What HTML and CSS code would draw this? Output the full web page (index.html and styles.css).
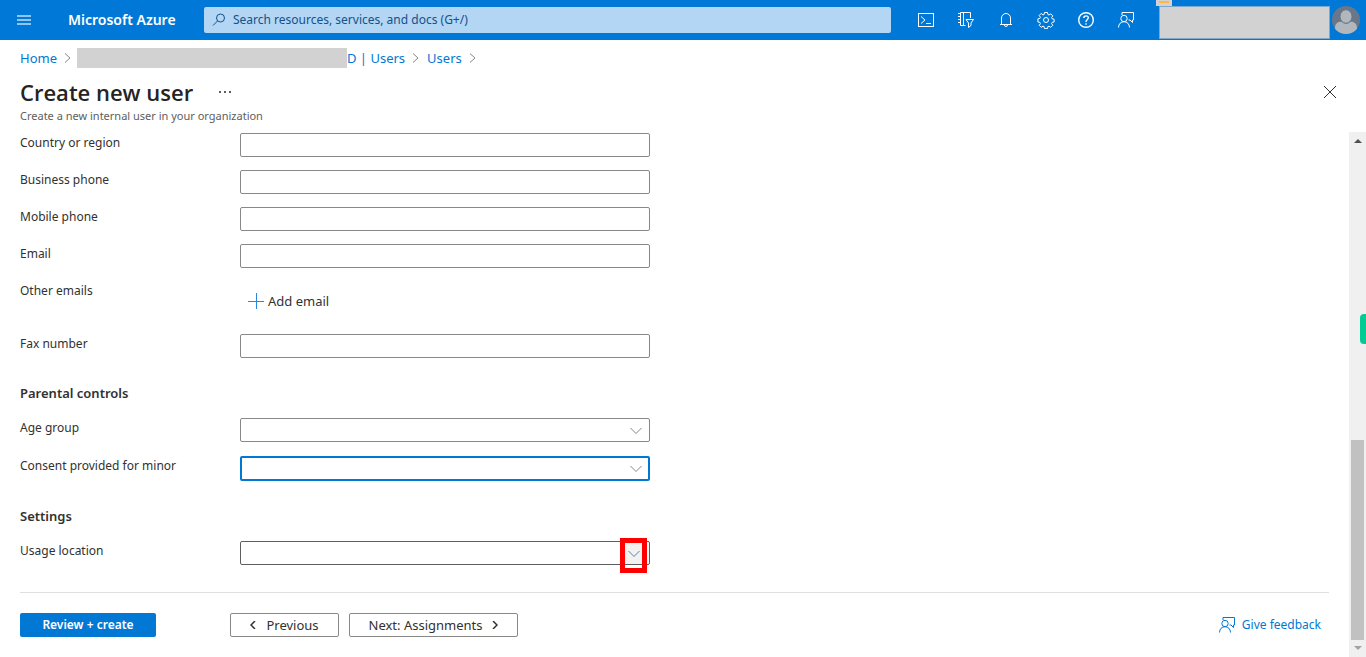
FILE: index.html
```html
<!DOCTYPE html>
<html lang="en">
<head>
<meta charset="utf-8">
<meta name="viewport" content="width=device-width, initial-scale=1">
<title>Create new user - Microsoft Azure</title>
<link rel="stylesheet" href="styles.css">
</head>
<body>
<svg class="defs" aria-hidden="true">
  <symbol id="chevron-down" viewBox="0 0 14 8"><path d="M1.500 1l5.500 5.500L12.500 1"/></symbol>
  <symbol id="chevron-right" viewBox="0 0 8 12"><path d="M1 1.500L6 6 1 10.500"/></symbol>
  <symbol id="feedback" viewBox="0 0 18 18"><path d="M5 4V1.500h11.500v7.500h-1v2.500L13 9h-1.500"/><circle cx="7" cy="7.500" r="3.200"/><path d="M1.500 16.500c0-3.500 2.400-5.800 5.500-5.800s5.500 2.300 5.500 5.800"/></symbol>
</svg>

<header class="topbar">
  <button class="menu" type="button" aria-label="Show portal menu">
    <svg width="14" height="10" viewBox="0 0 14 10"><path d="M0 1h14M0 5h14M0 9h14"/></svg>
  </button>
  <a class="brand" href="#">Microsoft Azure</a>
  <div class="search">
    <svg class="icon" width="14" height="14" viewBox="0 0 14 14"><circle cx="8.500" cy="5" r="4"/><path d="M5.500 8L1 12.500"/></svg>
    <input type="search" aria-label="Search" placeholder="Search resources, services, and docs (G+/)">
  </div>
  <nav class="tools" aria-label="Portal tools">
    <button type="button" aria-label="Cloud Shell"><svg class="icon" width="18" height="18" viewBox="0 0 18 18"><rect x="1.500" y="2.500" width="15" height="13"/><path d="M4 5.500L8 9l-4 3.500M9 12.500h5"/></svg></button>
    <button type="button" aria-label="Directories and subscriptions"><svg class="icon" width="18" height="18" viewBox="0 0 18 18"><path d="M8.500 14.500H3.500v-13H13.500V7M6.500 1.500v13M1 2.500h2.500M1 5.500h2.500M1 8.500h2.500M1 11.500h2.500"/><path d="M9 8.500h7.500L14 12v2.500l-2.500 2V12z"/></svg></button>
    <button type="button" aria-label="Notifications"><svg class="icon" width="18" height="18" viewBox="0 0 18 18"><path d="M3 13.500h12M4.500 13.500V7a4.500 4.500 0 0 1 9 0v6.500M7.500 14a1.500 1.500 0 0 0 3 0"/></svg></button>
    <button type="button" aria-label="Settings"><svg class="icon" width="18" height="18" viewBox="0 0 18 18"><path d="M7.500 1.500h3l.4 2 1.100.5 1.800-1.200 2 2.100-1.200 1.700.5 1.200 2 .4v2.800l-2 .4-.5 1.200 1.200 1.700-2 2-1.800-1.100-1.100.4-.4 2h-3l-.4-2-1.100-.4-1.800 1.100-2-2 1.200-1.700-.5-1.200-2-.4V7.800l2-.4.5-1.200-1.200-1.700 2-2.100L6 4l1.100-.5z"/><circle cx="9" cy="9" r="2.500"/></svg></button>
    <button type="button" aria-label="Help"><svg class="icon help" width="18" height="18" viewBox="0 0 18 18"><circle cx="9" cy="9" r="7.300"/><path d="M6.800 7c0-3 4.500-2.700 4.500-.2C11.300 8.500 9 8.500 9 11M9 12.300v1.400"/></svg></button>
    <button type="button" aria-label="Feedback"><svg class="icon" width="18" height="18"><use href="#feedback"/></svg></button>
  </nav>
  <div class="account">
    <span class="account-tab"></span>
    <span class="account-name"></span>
    <svg class="avatar" width="28" height="28" viewBox="0 0 28 28"><defs><clipPath id="face"><circle cx="14" cy="14" r="14"/></clipPath></defs><g clip-path="url(#face)"><rect width="28" height="28" fill="#69778a"/><path d="M3 28v-6c0-6 5-7 7-6 3 2 6 2 8 0 3-1 7 1 7 6v6z" fill="#b1b7bd"/><ellipse cx="14" cy="10.500" rx="6" ry="6.800" fill="#b1b7bd" stroke="#69778a"/></g></svg>
  </div>
</header>

<nav class="crumbs" aria-label="Breadcrumb">
  <a href="#">Home</a>
  <svg class="icon" width="8" height="12"><use href="#chevron-right"/></svg>
  <a class="tenant" href="#"><span class="redacted"></span>D | Users</a>
  <svg class="icon" width="8" height="12"><use href="#chevron-right"/></svg>
  <a href="#">Users</a>
  <svg class="icon" width="8" height="12"><use href="#chevron-right"/></svg>
</nav>

<div class="heading">
  <div class="heading-row">
    <h1>Create new user</h1>
    <button class="more" type="button" aria-label="More actions"><svg width="12" height="2" viewBox="0 0 12 2"><path d="M0 0h2v2H0zM5 0h2v2H5zM10 0h2v2h-2z"/></svg></button>
    <button class="close" type="button" aria-label="Close"><svg class="icon" width="12" height="12" viewBox="0 0 12 12"><path d="M0 0l12 12M12 0L0 12"/></svg></button>
  </div>
  <p>Create a new internal user in your organization</p>
</div>

<div class="blade">
  <main class="pane">
    <form class="form">
      <div class="row"><label for="country">Country or region</label><input id="country" type="text"></div>
      <div class="row"><label for="business">Business phone</label><input id="business" type="tel"></div>
      <div class="row"><label for="mobile">Mobile phone</label><input id="mobile" type="tel"></div>
      <div class="row"><label for="email">Email</label><input id="email" type="email"></div>
      <div class="row"><span class="label">Other emails</span>
        <button class="add" type="button"><svg class="icon" width="16" height="16" viewBox="0 0 16 16"><path d="M8.500 0v16M0 8.500h16"/></svg>Add email</button></div>
      <div class="row"><label for="fax">Fax number</label><input id="fax" type="tel"></div>
      <h2>Parental controls</h2>
      <div class="row"><label for="age">Age group</label>
        <div class="picker"><select id="age"><option></option></select><svg class="icon" width="14" height="8"><use href="#chevron-down"/></svg></div></div>
      <div class="row"><label for="consent">Consent provided for minor</label>
        <div class="picker focused"><select id="consent"><option></option></select><svg class="icon" width="14" height="8"><use href="#chevron-down"/></svg></div></div>
      <h2>Settings</h2>
      <div class="row"><label for="location">Usage location</label>
        <div class="picker hovered"><select id="location"><option></option></select><span class="marker"><svg class="icon" width="14" height="8"><use href="#chevron-down"/></svg></span></div></div>
    </form>
    <footer class="actions">
      <button class="primary" type="button">Review + create</button>
      <button class="secondary" type="button"><svg class="icon" width="6" height="8" viewBox="0 0 6 8"><path d="M5 0L1 4l4 4"/></svg>Previous</button>
      <button class="secondary next" type="button">Next: Assignments<svg class="icon" width="6" height="8" viewBox="0 0 6 8"><path d="M1 0l4 4-4 4"/></svg></button>
      <a class="feedback" href="#"><svg class="icon" width="18" height="18"><use href="#feedback"/></svg>Give feedback</a>
    </footer>
  </main>
  <div class="scrollbar" aria-hidden="true">
    <svg width="8" height="4" viewBox="0 0 8 4"><path d="M4 0l4 4H0z" fill="#505050"/></svg>
    <span class="thumb"></span>
    <svg width="8" height="4" viewBox="0 0 8 4"><path d="M0 0h8L4 4z" fill="#a3a3a3"/></svg>
    <span class="side-tab"></span>
  </div>
</div>
</body>
</html>
```

FILE: styles.css
```css
* { box-sizing: border-box; }

body {
  margin: 0;
  min-height: 100vh;
  display: flex;
  flex-direction: column;
  background: #fff;
  color: #323130;
  font: 13px/20px "Noto Sans", "Open Sans", sans-serif;
}

button, input, select { font: inherit; color: inherit; }
button { border: 0; padding: 0; background: none; cursor: pointer; }
a { color: #0078d4; text-decoration: none; }
h1, h2, p { margin: 0; }

.defs { position: absolute; width: 0; height: 0; }
.icon { fill: none; stroke: currentColor; stroke-width: 1; flex: none; }

/* Top bar */
.topbar {
  display: flex;
  align-items: center;
  height: 40px;
  padding: 0 6px 0 12px;
  background: #0078d7;
  color: #fff;
}
.menu { display: flex; width: 24px; padding: 0 5px; }
.menu path { stroke: #8fc5ef; stroke-width: 2; }
.brand {
  width: 136px;
  margin-left: 32px;
  color: #fff;
  font-size: 14px;
  font-weight: 600;
  white-space: nowrap;
}
.search {
  display: flex;
  flex: 1;
  align-items: center;
  gap: 7px;
  height: 26px;
  padding: 0 8px;
  border-radius: 2px;
  background: #b2d6f3;
  color: #15508a;
}
.search input {
  flex: 1;
  min-width: 0;
  padding: 0;
  border: 0;
  outline: 0;
  background: none;
  font-size: 12px;
}
.search input::placeholder { color: #15508a; opacity: 1; }
.tools { display: flex; margin-left: 15px; }
.tools button {
  display: flex;
  align-items: center;
  justify-content: center;
  width: 40px;
  height: 40px;
}
.help { stroke-width: 1.4; }
.account {
  position: relative;
  display: flex;
  align-items: center;
  gap: 2px;
  height: 40px;
  margin-left: 13px;
}
.account-name {
  width: 171px;
  height: 33px;
  margin-top: 5px;
  border: 1px solid #7da7cc;
  background: #d2d2d2;
}
.account-tab {
  position: absolute;
  top: 0;
  left: -3px;
  width: 16px;
  height: 6px;
  border: solid #d2d2d2;
  border-width: 1px 3px 3px;
  background: #ffb83d;
}

/* Breadcrumb and title */
.crumbs {
  display: flex;
  align-items: center;
  gap: 7px;
  height: 28px;
  padding: 8px 20px 0;
}
.crumbs .icon { color: #8a8886; }
.tenant { display: flex; margin-left: -2px; }
.redacted { width: 270px; height: 20px; background: #d2d2d2; }
.heading { padding: 8px 29px 8px 20px; }
.heading-row { display: flex; align-items: center; height: 32px; }
h1 { font: 600 22px/30px "Open Sans", "Noto Sans", sans-serif; color: #252423; }
.more { display: flex; margin-left: 26px; }
.more path { fill: #605e5c; }
.close { display: flex; margin-left: auto; padding: 1px; }
.heading p { font-size: 11px; line-height: 16px; color: #605e5c; }

/* Form */
.blade { display: flex; flex: 1; }
.pane { flex: 1; display: flex; flex-direction: column; min-width: 0; padding: 1px 20px 20px; }
.form { display: flex; flex-direction: column; gap: 13px; max-width: 630px; }
.row { display: grid; grid-template-columns: 220px 1fr; align-items: start; }
.row label, .label { font-size: 12px; }
.row input, .picker select {
  display: block;
  width: 100%;
  height: 24px;
  padding: 0 8px;
  border: 1px solid #8a8886;
  border-radius: 2px;
  outline: 0;
  background: #fff;
}
h2 { margin: 12px 0 2px; font-size: 13px; font-weight: 600; line-height: 20px; }
.add {
  display: flex;
  align-items: center;
  justify-self: start;
  gap: 4px;
  height: 40px;
  padding-left: 8px;
}
.add .icon { color: #2b88d8; }
.picker { position: relative; height: 25px; }
.picker select { appearance: none; }
.picker > .icon { position: absolute; right: 7px; top: 9px; color: #8a8886; }
.picker.focused select { height: 25px; border: 2px solid #0078d4; }
.picker.hovered select { border-color: #605e5c; }
.marker {
  position: absolute;
  top: -3px;
  right: 3px;
  display: flex;
  align-items: center;
  justify-content: center;
  width: 27px;
  height: 35px;
  border: 5px solid #f00;
  background: linear-gradient(#f3f2f1 21px, #605e5c 21px 22px, #fff 22px);
}
.marker .icon { color: #4f86b0; margin-bottom: 3px; }

/* Footer */
.actions {
  display: flex;
  align-items: center;
  gap: 10px;
  margin-top: auto;
  padding-top: 20px;
  border-top: 1px solid #e1dfdd;
}
.actions button {
  display: flex;
  align-items: center;
  justify-content: center;
  gap: 10px;
  height: 24px;
  border-radius: 2px;
  white-space: nowrap;
}
.actions .primary {
  width: 136px;
  margin-right: 64px;
  background: #0078d4;
  color: #fff;
  font-size: 12px;
  font-weight: 600;
}
.actions .secondary { width: 109px; border: 1px solid #8a8886; }
.actions .next { width: 169px; }
.secondary .icon { stroke-width: 1.500; }
.feedback {
  display: flex;
  align-items: center;
  gap: 6px;
  margin-left: auto;
  padding-right: 8px;
  font-size: 12px;
}

/* Scroll track */
.scrollbar {
  position: relative;
  display: flex;
  flex-direction: column;
  align-items: center;
  width: 17px;
  padding: 7px 0;
  background: #f0f0f0;
}
.thumb { width: 13px; height: 200px; margin: auto 0 6px; background: #c1c1c1; }
.side-tab {
  position: absolute;
  top: 182px;
  right: 0;
  width: 6px;
  height: 30px;
  border-radius: 4px 0 0 4px;
  background: #00cc93;
}
```
